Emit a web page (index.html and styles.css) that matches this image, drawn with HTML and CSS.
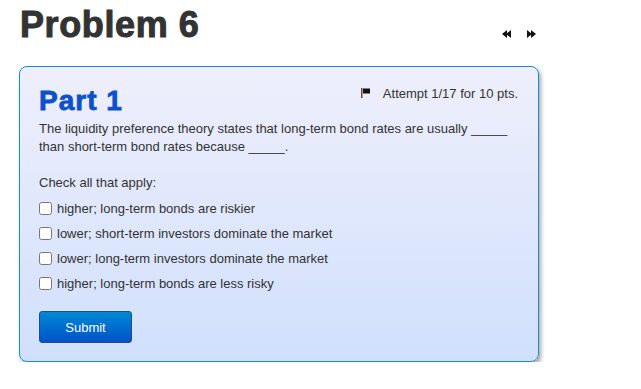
FILE: index.html
```html
<!DOCTYPE html>
<html>
<head>
<meta charset="utf-8">
<link rel="stylesheet" href="styles.css">
</head>
<body>
<div class="page">
  <div class="header">
    <h1 class="title">Problem 6</h1>
    <div class="nav">
      <svg class="nav-icon" width="10" height="8" viewBox="0 0 10 8"><polygon points="0,4 5,0 5,8" fill="#111"/><polygon points="4,4 9,0 9,8" fill="#111"/></svg>
      <svg class="nav-icon" width="10" height="8" viewBox="0 0 10 8"><polygon points="1,0 6,4 1,8" fill="#111"/><polygon points="5,0 10,4 5,8" fill="#111"/></svg>
    </div>
  </div>
  <div class="card">
    <div class="card-head">
      <h2 class="part">Part 1</h2>
      <div class="attempt">
        <svg class="flag" width="10" height="10" viewBox="0 0 10 10"><rect x="0" y="0" width="1.5" height="10" fill="#6b4a3a"/><rect x="2" y="0.5" width="7" height="5" fill="#111"/></svg>
        <span>Attempt 1/17 for 10 pts.</span>
      </div>
    </div>
    <p class="question">The liquidity preference theory states that long-term bond rates are usually _____ than short-term bond rates because _____.</p>
    <p class="instr">Check all that apply:</p>
    <div class="options">
      <label class="option"><input type="checkbox" class="cb"><span>higher; long-term bonds are riskier</span></label>
      <label class="option"><input type="checkbox" class="cb"><span>lower; short-term investors dominate the market</span></label>
      <label class="option"><input type="checkbox" class="cb"><span>lower; long-term investors dominate the market</span></label>
      <label class="option"><input type="checkbox" class="cb"><span>higher; long-term bonds are less risky</span></label>
    </div>
    <button class="submit">Submit</button>
  </div>
</div>
</body>
</html>
```

FILE: styles.css
```css
html, body {
  margin: 0;
  padding: 0;
  background: #fff;
  font-family: "Liberation Sans", Arial, sans-serif;
  color: #333;
}
.page {
  padding: 5px 0 0 19px;
  width: 520px;
}
.header {
  display: flex;
  justify-content: space-between;
  align-items: center;
  height: 40px;
  margin-bottom: 21px;
}
.title {
  margin: 0 0 0 1px;
  font-size: 36px;
  line-height: 40px;
  font-weight: 700;
  color: #333;
  letter-spacing: 0.6px;
  -webkit-text-stroke: 1px #333;
}
.nav {
  display: flex;
  gap: 14px;
  margin-right: 3px;
  margin-top: 18px;
}
.nav-icon {
  display: block;
}
.card {
  border: 1px solid #1a8ad4;
  border-radius: 8px;
  background: linear-gradient(#efeffc, #d0e0fc);
  box-shadow: 2px 3px 4px rgba(0,0,0,0.35);
  padding: 18px 20px 17px 19px;
  box-sizing: border-box;
  height: 296px;
}
.card-head {
  display: flex;
  justify-content: space-between;
  align-items: flex-start;
}
.part {
  margin: 0;
  font-size: 28px;
  line-height: 32px;
  font-weight: 700;
  color: #0b50cc;
  letter-spacing: 1px;
  -webkit-text-stroke: 0.8px #0b50cc;
}
.attempt {
  display: flex;
  align-items: center;
  gap: 12px;
  font-size: 13px;
  line-height: 15px;
  margin-top: 1px;
}
.flag {
  display: block;
  margin-top: -2px;
}
.question {
  margin: 3px 0 0 0;
  font-size: 13px;
  line-height: 18px;
}
.instr {
  margin: 18px 0 0 0;
  font-size: 13px;
  line-height: 18px;
}
.options {
  margin-top: 3px;
  display: flex;
  flex-direction: column;
}
.option {
  display: flex;
  align-items: center;
  gap: 5px;
  height: 25px;
  font-size: 13px;
  padding-top: 1px;
  box-sizing: border-box;
}
.cb {
  margin: 0;
  width: 13px;
  height: 13px;
}
.submit {
  margin-top: 16px;
  width: 93px;
  height: 32px;
  border: 1px solid #244a8c;
  border-radius: 3px;
  background: linear-gradient(#0089d6, #0052c8);
  color: #fff;
  font-family: "Liberation Sans", Arial, sans-serif;
  font-size: 13px;
  padding: 0;
}
```
